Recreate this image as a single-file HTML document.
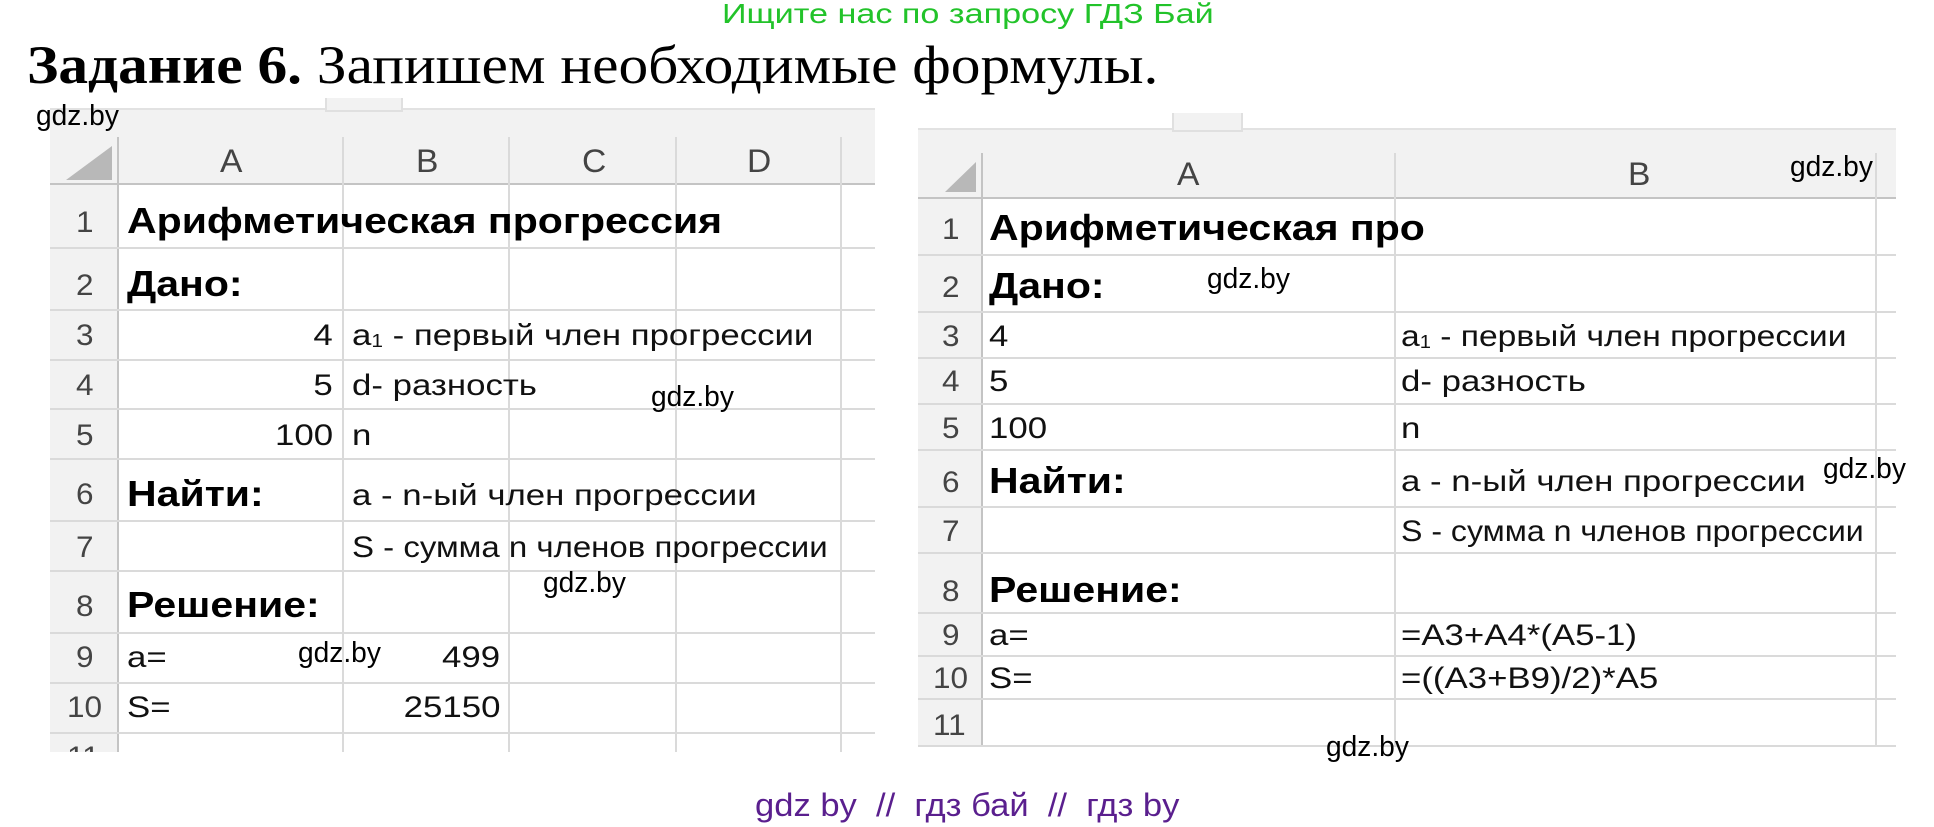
<!DOCTYPE html>
<html><head><meta charset="utf-8">
<style>
*{margin:0;padding:0;box-sizing:border-box}
body{width:1934px;height:827px;background:#fff;position:relative;overflow:hidden;font-family:"Liberation Sans","Noto Sans CJK SC",sans-serif}
.a{position:absolute}
.t{position:absolute;white-space:nowrap;line-height:1;font-size:30px;color:#111;transform-origin:0 0;transform:scaleX(1.16);margin-top:-2px}
.b{font-weight:bold;font-size:36px;color:#000;transform:scaleX(1.14);margin-top:-3px}
.n{color:#444;font-size:30px;transform:scaleX(1.05)}
.h{background:#f2f2f2}
.hl{position:absolute;height:2px;background:#dadada}
.vl{position:absolute;width:2px;background:#dadada}
.w{position:absolute;white-space:nowrap;font-size:29px;line-height:1;color:#000;transform-origin:0 0;transform:scaleX(0.97);margin-top:-2px}
</style></head><body>

<div class="t" style="left:722px;top:2px;font-size:28px;color:#22c32a;transform:scaleX(1.22)">Ищите нас по запросу ГДЗ Бай</div>
<div class="t" style="left:27px;top:40px;font-family:'Liberation Serif',serif;font-size:54px;color:#000;transform:scaleX(1.1)"><b>Задание 6.</b> Запишем необходимые формулы.</div>

<!-- LEFT TABLE -->
<div class="a h" style="left:50px;top:110px;width:825px;height:73px"></div>
<div class="a" style="left:50px;top:100px;width:825px;height:10px;background:#fff;border-bottom:2px solid #e2e2e2"></div>
<div class="a" style="left:325px;top:98px;width:78px;height:14px;background:#f2f2f2;border:2px solid #e0e0e0;border-top:none"></div>
<div class="a h" style="left:50px;top:183px;width:68px;height:569px"></div>
<div class="a" style="left:118px;top:185px;width:757px;height:567px;background:#fff"></div>
<svg class="a" style="left:60px;top:146px" width="52" height="34"><polygon points="52,0 52,34 6,34" fill="#b8b8b8"/></svg>
<div class="a" style="left:50px;top:183px;width:825px;height:2px;background:#c4c4c4"></div>
<div class="a" style="left:117px;top:137px;width:2px;height:615px;background:#c4c4c4"></div>
<div class="vl" style="left:342px;top:137px;height:615px"></div>
<div class="vl" style="left:508px;top:137px;height:615px"></div>
<div class="vl" style="left:675px;top:137px;height:615px"></div>
<div class="vl" style="left:840px;top:137px;height:615px"></div>
<div class="hl" style="left:50px;top:247px;width:825px"></div>
<div class="hl" style="left:50px;top:309px;width:825px"></div>
<div class="hl" style="left:50px;top:359px;width:825px"></div>
<div class="hl" style="left:50px;top:408px;width:825px"></div>
<div class="hl" style="left:50px;top:458px;width:825px"></div>
<div class="hl" style="left:50px;top:520px;width:825px"></div>
<div class="hl" style="left:50px;top:570px;width:825px"></div>
<div class="hl" style="left:50px;top:632px;width:825px"></div>
<div class="hl" style="left:50px;top:682px;width:825px"></div>
<div class="hl" style="left:50px;top:732px;width:825px"></div>

<div class="t n" style="left:220px;top:147px;font-size:32px">A</div>
<div class="t n" style="left:416px;top:147px;font-size:32px">B</div>
<div class="t n" style="left:582px;top:147px;font-size:32px">C</div>
<div class="t n" style="left:747px;top:147px;font-size:32px">D</div>

<div class="t n" style="left:76px;top:210px">1</div>
<div class="t n" style="left:76px;top:273px">2</div>
<div class="t n" style="left:76px;top:323px">3</div>
<div class="t n" style="left:76px;top:373px">4</div>
<div class="t n" style="left:76px;top:423px">5</div>
<div class="t n" style="left:76px;top:482px">6</div>
<div class="t n" style="left:76px;top:535px">7</div>
<div class="t n" style="left:76px;top:594px">8</div>
<div class="t n" style="left:76px;top:645px">9</div>
<div class="t n" style="left:67px;top:695px">10</div>
<div class="a" style="left:50px;top:742px;width:68px;height:10px;overflow:hidden"><div class="t n" style="left:17px;top:3px">11</div></div>

<div class="t b" style="left:127px;top:206px">Арифметическая прогрессия</div>
<div class="t b" style="left:127px;top:269px">Дано:</div>
<div class="t" style="right:1601px;top:323px;transform-origin:100% 0">4</div>
<div class="t" style="left:352px;top:323px">a<sub style="font-size:18px;vertical-align:-2px">1</sub> - первый член прогрессии</div>
<div class="t" style="right:1601px;top:373px;transform-origin:100% 0">5</div>
<div class="t" style="left:352px;top:373px">d- разность</div>
<div class="t" style="right:1601px;top:423px;transform-origin:100% 0">100</div>
<div class="t" style="left:352px;top:423px">n</div>
<div class="t b" style="left:127px;top:479px">Найти:</div>
<div class="t" style="left:352px;top:483px">a - n-ый член прогрессии</div>
<div class="t" style="left:352px;top:535px;transform:scaleX(1.1)">S - сумма n членов прогрессии</div>
<div class="t b" style="left:127px;top:590px">Решение:</div>
<div class="t" style="left:127px;top:645px">a=</div>
<div class="t" style="right:1434px;top:645px;transform-origin:100% 0">499</div>
<div class="t" style="left:127px;top:695px">S=</div>
<div class="t" style="right:1434px;top:695px;transform-origin:100% 0">25150</div>

<!-- RIGHT TABLE -->
<div class="a h" style="left:918px;top:115px;width:978px;height:83px"></div>
<div class="a" style="left:918px;top:115px;width:978px;height:15px;background:#fff;border-bottom:2px solid #e2e2e2"></div>
<div class="a" style="left:1172px;top:113px;width:71px;height:19px;background:#f2f2f2;border:2px solid #e0e0e0;border-top:none"></div>
<div class="a h" style="left:918px;top:198px;width:63px;height:548px"></div>
<div class="a" style="left:982px;top:200px;width:914px;height:546px;background:#fff"></div>
<svg class="a" style="left:945px;top:162px" width="31" height="30"><polygon points="31,0 31,30 0,30" fill="#b8b8b8"/></svg>
<div class="a" style="left:918px;top:197px;width:978px;height:2px;background:#c4c4c4"></div>
<div class="a" style="left:981px;top:153px;width:2px;height:593px;background:#c4c4c4"></div>
<div class="vl" style="left:1394px;top:153px;height:593px"></div>
<div class="vl" style="left:1875px;top:153px;height:593px"></div>
<div class="hl" style="left:918px;top:254px;width:978px"></div>
<div class="hl" style="left:918px;top:311px;width:978px"></div>
<div class="hl" style="left:918px;top:357px;width:978px"></div>
<div class="hl" style="left:918px;top:403px;width:978px"></div>
<div class="hl" style="left:918px;top:449px;width:978px"></div>
<div class="hl" style="left:918px;top:506px;width:978px"></div>
<div class="hl" style="left:918px;top:552px;width:978px"></div>
<div class="hl" style="left:918px;top:612px;width:978px"></div>
<div class="hl" style="left:918px;top:655px;width:978px"></div>
<div class="hl" style="left:918px;top:698px;width:978px"></div>
<div class="hl" style="left:918px;top:745px;width:978px"></div>

<div class="t n" style="left:1177px;top:160px;font-size:32px">A</div>
<div class="t n" style="left:1628px;top:160px;font-size:32px">B</div>

<div class="t n" style="left:942px;top:217px">1</div>
<div class="t n" style="left:942px;top:275px">2</div>
<div class="t n" style="left:942px;top:324px">3</div>
<div class="t n" style="left:942px;top:369px">4</div>
<div class="t n" style="left:942px;top:416px">5</div>
<div class="t n" style="left:942px;top:470px">6</div>
<div class="t n" style="left:942px;top:519px">7</div>
<div class="t n" style="left:942px;top:579px">8</div>
<div class="t n" style="left:942px;top:623px">9</div>
<div class="t n" style="left:933px;top:666px">10</div>
<div class="t n" style="left:933px;top:713px">11</div>

<div class="t b" style="left:989px;top:213px">Арифметическая про</div>
<div class="t b" style="left:989px;top:271px">Дано:</div>
<div class="t" style="left:989px;top:324px">4</div>
<div class="t" style="left:1401px;top:324px;transform:scaleX(1.12)">a<sub style="font-size:18px;vertical-align:-2px">1</sub> - первый член прогрессии</div>
<div class="t" style="left:989px;top:369px">5</div>
<div class="t" style="left:1401px;top:369px">d- разность</div>
<div class="t" style="left:989px;top:416px">100</div>
<div class="t" style="left:1401px;top:416px">n</div>
<div class="t b" style="left:989px;top:466px">Найти:</div>
<div class="t" style="left:1401px;top:469px">a - n-ый член прогрессии</div>
<div class="t" style="left:1401px;top:519px;transform:scaleX(1.07)">S - сумма n членов прогрессии</div>
<div class="t b" style="left:989px;top:575px">Решение:</div>
<div class="t" style="left:989px;top:623px">a=</div>
<div class="t" style="left:1401px;top:623px">=A3+A4*(A5-1)</div>
<div class="t" style="left:989px;top:666px">S=</div>
<div class="t" style="left:1401px;top:666px">=((A3+B9)/2)*A5</div>

<!-- watermarks -->
<div class="w" style="left:36px;top:104px">gdz.by</div>
<div class="w" style="left:651px;top:385px">gdz.by</div>
<div class="w" style="left:543px;top:571px">gdz.by</div>
<div class="w" style="left:298px;top:641px">gdz.by</div>
<div class="w" style="left:1790px;top:155px">gdz.by</div>
<div class="w" style="left:1207px;top:267px">gdz.by</div>
<div class="w" style="left:1823px;top:457px">gdz.by</div>
<div class="w" style="left:1326px;top:735px">gdz.by</div>

<div class="t" style="left:755px;top:791px;font-size:32px;color:#5a1f8e;white-space:pre;transform:scaleX(1.08)">gdz by  //  гдз бай  //  гдз by</div>
</body></html>
